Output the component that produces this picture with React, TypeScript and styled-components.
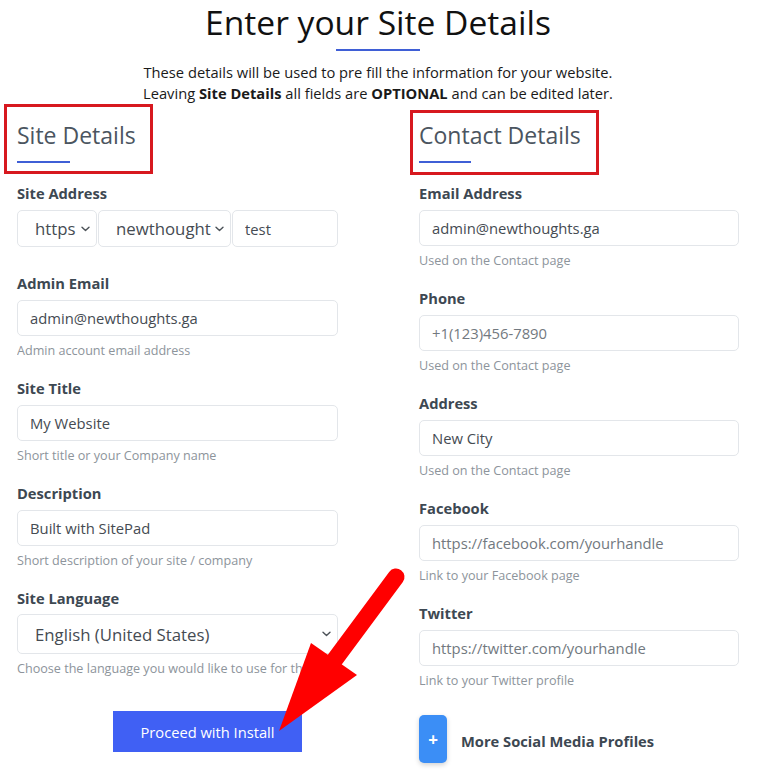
import React from "react";
import styled, { createGlobalStyle } from "styled-components";

const Global = createGlobalStyle`
  html, body { margin: 0; padding: 0; background: #ffffff; }
  body { font-family: "Open Sans", "Liberation Sans", sans-serif; }
  * { box-sizing: border-box; }
`;

const Page = styled.div`
  position: relative;
  width: 768px;
  height: 773px;
  overflow: hidden;
  background: #fff;
`;

const Header = styled.header`
  display: flex;
  flex-direction: column;
  align-items: center;
  padding-right: 12px;
`;

const Title = styled.h1`
  margin: 0;
  font-size: 33.6px;
  line-height: 44px;
  font-weight: 400;
  color: #111;
`;

const Bar = styled.div<{ $w: number; $mt: number }>`
  width: ${(p) => p.$w}px;
  height: 2px;
  margin-top: ${(p) => p.$mt}px;
  background: #3f5fd6;
`;

const Intro = styled.p`
  margin: 11px 0 0;
  font-size: 14.7px;
  line-height: 21px;
  color: #1a1a1a;
  text-align: center;
  b { font-weight: 700; }
`;

const Columns = styled.div`
  display: grid;
  grid-template-columns: 321px 320px;
  column-gap: 81px;
  padding-left: 17px;
  margin-top: 14px;
  align-items: start;
`;

const Column = styled.section`
  display: flex;
  flex-direction: column;
`;

const HeadingWrap = styled.div`
  position: relative;
  margin-bottom: 20px;
`;

const Heading = styled.h2`
  margin: 0;
  font-size: 23px;
  line-height: 34px;
  font-weight: 400;
  color: #4b5560;
`;

const RedFrame = styled.div<{ $top: number; $left: number; $w: number; $h: number }>`
  position: absolute;
  top: ${(p) => p.$top}px;
  left: ${(p) => p.$left}px;
  width: ${(p) => p.$w}px;
  height: ${(p) => p.$h}px;
  border: 3px solid #d7181f;
  pointer-events: none;
`;

const Field = styled.div<{ $mb?: number }>`
  display: flex;
  flex-direction: column;
  margin-bottom: ${(p) => (p.$mb ?? 18)}px;
`;

const Label = styled.label`
  font-size: 14.7px;
  line-height: 20px;
  font-weight: 700;
  color: #3d4852;
  margin-bottom: 7px;
`;

const TextInput = styled.input`
  height: 36px;
  width: 100%;
  min-width: 0;
  border: 1px solid #e3e6ea;
  border-radius: 5px;
  padding: 0 12px;
  font-family: inherit;
  font-size: 14.8px;
  color: #454b52;
  background: #fff;
  outline: none;
  &::placeholder { color: #727980; opacity: 1; }
`;

const Help = styled.div`
  margin-top: 6px;
  font-size: 12.6px;
  line-height: 18px;
  color: #8d949b;
  white-space: nowrap;
  overflow: hidden;
`;

const AddressRow = styled.div`
  display: flex;
  gap: 1px;
  height: 37px;
`;

const SelectBox = styled.div<{ $w?: number; $h: number; $pl: number }>`
  display: flex;
  align-items: center;
  justify-content: space-between;
  ${(p) => (p.$w ? `width: ${p.$w}px; flex: none;` : "width: 100%;")}
  height: ${(p) => p.$h}px;
  padding: 0 6px 0 ${(p) => p.$pl}px;
  border: 1px solid #e3e6ea;
  border-radius: 5px;
  font-size: 16.8px;
  color: #454b52;
  background: #fff;
  white-space: nowrap;
  overflow: hidden;
`;

const Chevron = () => (
  <svg width="9" height="6" viewBox="0 0 9 6" style={{ flex: "none" }}>
    <path d="M1 1.2 L4.5 4.6 L8 1.2" fill="none" stroke="#4d5359" strokeWidth="1.4" strokeLinecap="round" strokeLinejoin="round" />
  </svg>
);

const SmallInput = styled(TextInput)`
  height: 37px;
  width: 106px;
  flex: none;
`;

const ButtonRow = styled.div`
  display: flex;
  padding-left: 96px;
  margin-top: 33px;
`;

const Primary = styled.button`
  width: 189px;
  height: 41px;
  border: none;
  background: #4060f4;
  color: #fff;
  font-family: inherit;
  font-size: 14.7px;
  border-radius: 0;
`;

const MoreRow = styled.div`
  display: flex;
  align-items: center;
  gap: 14px;
  margin-top: 7px;
`;

const PlusButton = styled.button`
  width: 28px;
  height: 48px;
  border: none;
  border-radius: 5px;
  background: #3b8ef6;
  color: #fff;
  font-size: 17px;
  font-weight: 700;
  font-family: inherit;
  padding: 0;
  box-shadow: 0 2px 5px rgba(0, 0, 0, 0.18);
`;

const MoreText = styled.span`
  font-size: 14.7px;
  font-weight: 700;
  color: #3d4852;
  margin-top: 3px;
`;

const ArrowSvg = styled.svg`
  position: absolute;
  left: 260px;
  top: 550px;
  pointer-events: none;
`;

const RedArrow = () => (
  <ArrowSvg width="160" height="200" viewBox="260 550 160 200">
    <line x1="396" y1="577" x2="333" y2="662" stroke="#ff0000" strokeWidth="17" strokeLinecap="round" />
    <polygon points="311,643 357,675 279,731" fill="#ff0000" />
  </ArrowSvg>
);

type F = { label: string; value?: string; placeholder?: string; help: string };

const leftFields: F[] = [
  { label: "Admin Email", value: "admin@newthoughts.ga", help: "Admin account email address" },
  { label: "Site Title", value: "My Website", help: "Short title or your Company name" },
  { label: "Description", value: "Built with SitePad", help: "Short description of your site / company" },
];

const rightFields: F[] = [
  { label: "Email Address", value: "admin@newthoughts.ga", help: "Used on the Contact page" },
  { label: "Phone", placeholder: "+1(123)456-7890", help: "Used on the Contact page" },
  { label: "Address", value: "New City", help: "Used on the Contact page" },
  { label: "Facebook", placeholder: "https://facebook.com/yourhandle", help: "Link to your Facebook page" },
  { label: "Twitter", placeholder: "https://twitter.com/yourhandle", help: "Link to your Twitter profile" },
];

const InputField = ({ f }: { f: F }) => (
  <Field>
    <Label>{f.label}</Label>
    <TextInput readOnly value={f.value ?? ""} placeholder={f.placeholder} />
    <Help>{f.help}</Help>
  </Field>
);

export default function App() {
  return (
    <Page>
      <Global />
      <Header>
        <Title>Enter your Site Details</Title>
        <Bar $w={84} $mt={5} />
        <Intro>
          These details will be used to pre fill the information for your website.
          <br />
          Leaving <b>Site Details</b> all fields are <b>OPTIONAL</b> and can be edited later.
        </Intro>
      </Header>
      <Columns>
        <Column>
          <HeadingWrap>
            <Heading>Site Details</Heading>
            <Bar $w={53} $mt={9} />
            <RedFrame $top={-14} $left={-13} $w={149} $h={70} />
          </HeadingWrap>
          <Field $mb={26}>
            <Label>Site Address</Label>
            <AddressRow>
              <SelectBox $w={80} $h={37} $pl={17}>
                <span>https</span>
                <Chevron />
              </SelectBox>
              <SelectBox $w={133} $h={37} $pl={17}>
                <span>newthought</span>
                <Chevron />
              </SelectBox>
              <SmallInput readOnly value="test" />
            </AddressRow>
          </Field>
          {leftFields.map((f) => (
            <InputField key={f.label} f={f} />
          ))}
          <Field $mb={0}>
            <Label>Site Language</Label>
            <SelectBox $h={40} $pl={17} style={{ marginTop: -1 }}>
              <span>English (United States)</span>
              <Chevron />
            </SelectBox>
            <Help>Choose the language you would like to use for the site</Help>
          </Field>
          <ButtonRow>
            <Primary>Proceed with Install</Primary>
          </ButtonRow>
        </Column>
        <Column>
          <HeadingWrap>
            <Heading>Contact Details</Heading>
            <Bar $w={52} $mt={9} />
            <RedFrame $top={-8} $left={-9} $w={189} $h={65} />
          </HeadingWrap>
          {rightFields.map((f) => (
            <InputField key={f.label} f={f} />
          ))}
          <MoreRow>
            <PlusButton>+</PlusButton>
            <MoreText>More Social Media Profiles</MoreText>
          </MoreRow>
        </Column>
      </Columns>
      <RedArrow />
    </Page>
  );
}
